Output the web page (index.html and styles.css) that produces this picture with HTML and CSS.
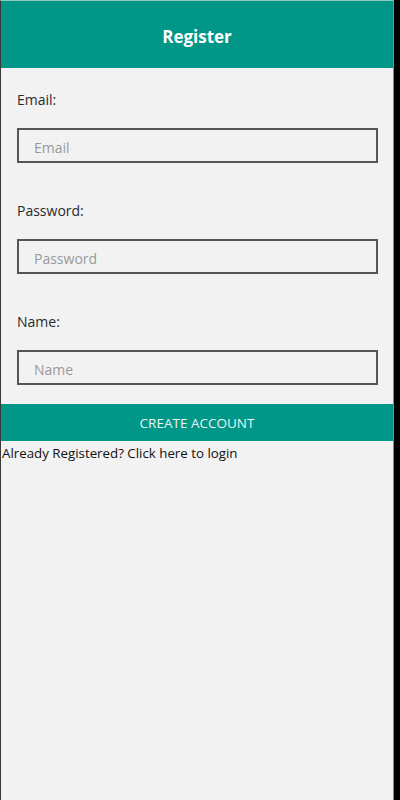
FILE: index.html
```html
<!DOCTYPE html>
<html>
<head>
    <title>Register</title>
    <link rel="stylesheet" href="styles.css">
</head>
<body>

<div class="screen">
    <div class="app-bar">
        <h1>Register</h1>
    </div>

    <form class="register-form">
        <div class="field">
            <label for="email">Email:</label>
            <input type="text" id="email" placeholder="Email">
        </div>
        <div class="field">
            <label for="password">Password:</label>
            <input type="password" id="password" placeholder="Password">
        </div>
        <div class="field">
            <label for="name">Name:</label>
            <input type="text" id="name" placeholder="Name">
        </div>
    </form>

    <button class="create-btn" type="button">CREATE ACCOUNT</button>
    <a class="login-link" href="#">Already Registered? Click here to login</a>
</div>

</body>
</html>
```

FILE: styles.css
```css
body {
    margin: 0;
    background: #000;
    font-family: 'Open Sans', sans-serif;
}

.screen {
    width: 394px;
    min-height: 800px;
    border-left: 1px solid #3a3a3a;
    border-right: 1px solid #8a8a8a;
    border-top: 1px solid #8fc9c2;
    box-sizing: border-box;
    background: #f2f2f2;
    display: flex;
    flex-direction: column;
}

.app-bar {
    background: #009688;
    height: 67px;
    padding-top: 3px;
    box-sizing: border-box;
    display: flex;
    align-items: center;
    justify-content: center;
}

.app-bar h1 {
    margin: 0;
    font-size: 17px;
    font-weight: 700;
    color: #fff;
}

.register-form {
    display: flex;
    flex-direction: column;
    gap: 38px;
    padding: 22px 15px 0 16px;
}

.field {
    display: flex;
    flex-direction: column;
    gap: 18px;
}

.field label {
    font-size: 14px;
    line-height: 20px;
    color: #2a2a2a;
}

.field input {
    height: 35px;
    box-sizing: border-box;
    border: 2px solid #555;
    background: #f2f2f2;
    padding: 3px 15px 0;
    font-family: inherit;
    font-size: 14px;
    color: #222;
}

.field input::placeholder {
    color: #999;
}

.create-btn {
    margin-top: 19px;
    height: 37px;
    border: none;
    background: #009688;
    color: #e8f5f3;
    font-family: inherit;
    font-size: 13.5px;
    cursor: pointer;
}

.login-link {
    margin-top: 4px;
    padding-left: 1px;
    font-size: 13.3px;
    line-height: 16px;
    color: #111;
    text-decoration: none;
}
```
